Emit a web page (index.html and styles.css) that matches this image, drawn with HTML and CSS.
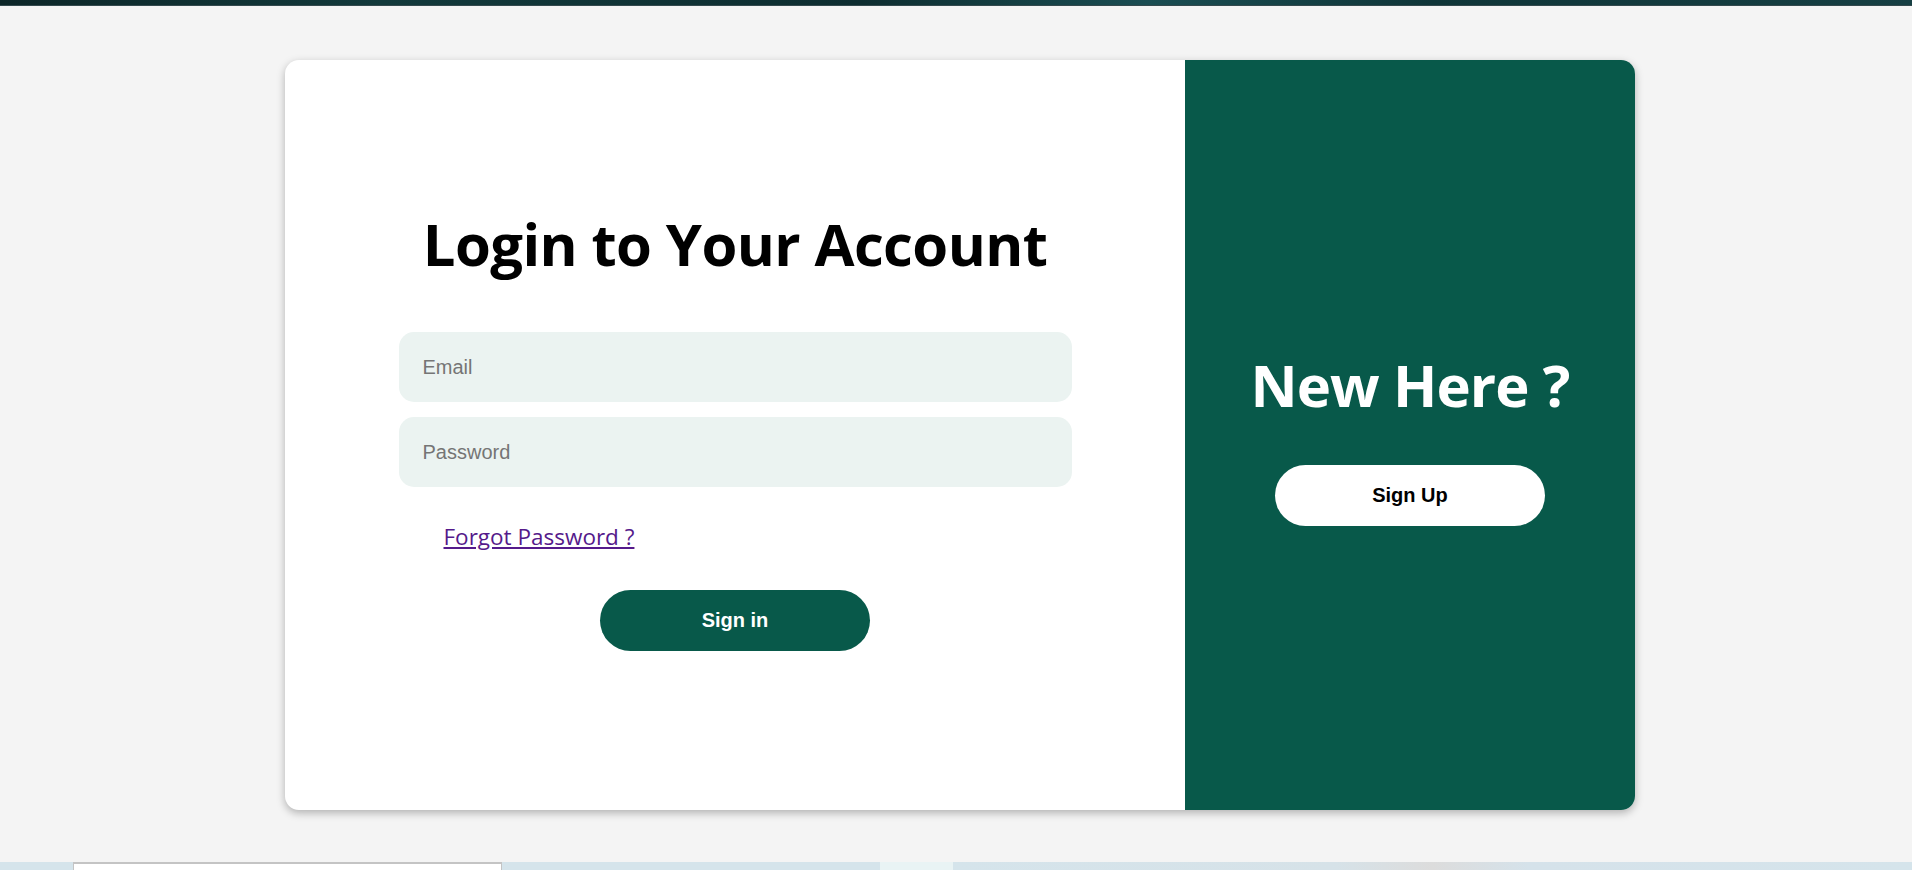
FILE: index.html
```html
<!DOCTYPE html>
<html lang="en">
<head>
<meta charset="utf-8">
<title>Login</title>
<link rel="stylesheet" href="styles.css">
</head>
<body>
<div class="topstrip"></div>
<main class="stage">
  <section class="card">
    <div class="login-side">
      <h1 class="heading">Login to Your Account</h1>
      <form class="form">
        <input class="field" type="email" placeholder="Email">
        <input class="field" type="password" placeholder="Password">
        <a class="forgot" href="#">Forgot Password ?</a>
        <button class="btn btn-primary" type="button">Sign in</button>
      </form>
    </div>
    <div class="signup-side">
      <h1 class="heading heading-light">New Here ?</h1>
      <button class="btn btn-light" type="button">Sign Up</button>
    </div>
  </section>
</main>
<div class="bottomstrip">
  <div class="tab-white"></div>
  <div class="tab-gap"></div>
  <div class="tab-light"></div>
  <div class="tab-rest"></div>
</div>
</body>
</html>
```
FILE: styles.css
```css
html, body {
  margin: 0;
  padding: 0;
  height: 870px;
  overflow: hidden;
  background: #f4f4f4;
}
.topstrip {
  height: 5px;
  background: linear-gradient(90deg, #0c2628 0%, #12393b 20%, #0d2d30 45%, #1a4d52 60%, #0f3538 75%, #163f43 100%);
  border-bottom: 1px solid #33494d;
}
.stage {
  display: flex;
  justify-content: center;
  padding: 54px 0 0 8px;
  height: 750px;
}
.card {
  width: 1350px;
  height: 750px;
  display: flex;
  border-radius: 14px;
  overflow: hidden;
  background: #fff;
  box-shadow: 0 3px 9px rgba(0, 0, 0, 0.28);
}
.login-side {
  flex: 2;
  display: flex;
  flex-direction: column;
  align-items: center;
  padding-top: 148px;
}
.signup-side {
  flex: 1;
  background: #08594a;
  display: flex;
  flex-direction: column;
  align-items: center;
  padding-top: 289px;
}
.heading {
  margin: 0;
  font-family: "Open Sans", sans-serif;
  font-weight: 700;
  font-size: 58px;
  line-height: 72px;
  color: #000;
  letter-spacing: -0.6px;
}
.heading-light {
  color: #fff;
  letter-spacing: -0.9px;
}
.form {
  width: 673px;
  margin-top: 52px;
  display: flex;
  flex-direction: column;
  align-items: center;
}
.field {
  box-sizing: border-box;
  width: 100%;
  height: 70px;
  border: none;
  outline: none;
  border-radius: 15px;
  background: #ebf3f1;
  padding: 0 0 0 24px;
  font-family: "Liberation Sans", Arial, sans-serif;
  font-size: 20px;
  color: #333;
  margin-bottom: 15px;
}
.field::placeholder {
  color: #757575;
}
.forgot {
  align-self: flex-start;
  margin: 20px 0 0 45px;
  font-family: "Open Sans", sans-serif;
  font-size: 22.5px;
  line-height: 30px;
  color: #551a8b;
  text-decoration: underline;
}
.btn {
  width: 270px;
  height: 61px;
  border: none;
  border-radius: 31px;
  font-family: "Liberation Sans", Arial, sans-serif;
  font-weight: 700;
  font-size: 20px;
  cursor: pointer;
}
.btn-primary {
  margin-top: 38px;
  background: #08594a;
  color: #fff;
}
.btn-light {
  margin-top: 44px;
  background: #fff;
  color: #000;
}
.bottomstrip {
  margin-top: 52px;
  height: 8px;
  display: flex;
  background: #d5e4eb;
}
.tab-white {
  margin-left: 73px;
  width: 429px;
  background: #fff;
  border-top: 2px solid #c4c4c4;
  border-left: 1px solid #c4c4c4;
  border-right: 1px solid #c4c4c4;
  box-sizing: border-box;
}
.tab-gap {
  width: 378px;
}
.tab-light {
  width: 73px;
  background: #e9f3f4;
}
.tab-rest {
  flex: 1;
  background: linear-gradient(90deg, #d5e4eb 0%, #d6e2e8 40%, #dcdcdc 50%, #d5e2ea 60%, #d5e4eb 100%);
}
```
